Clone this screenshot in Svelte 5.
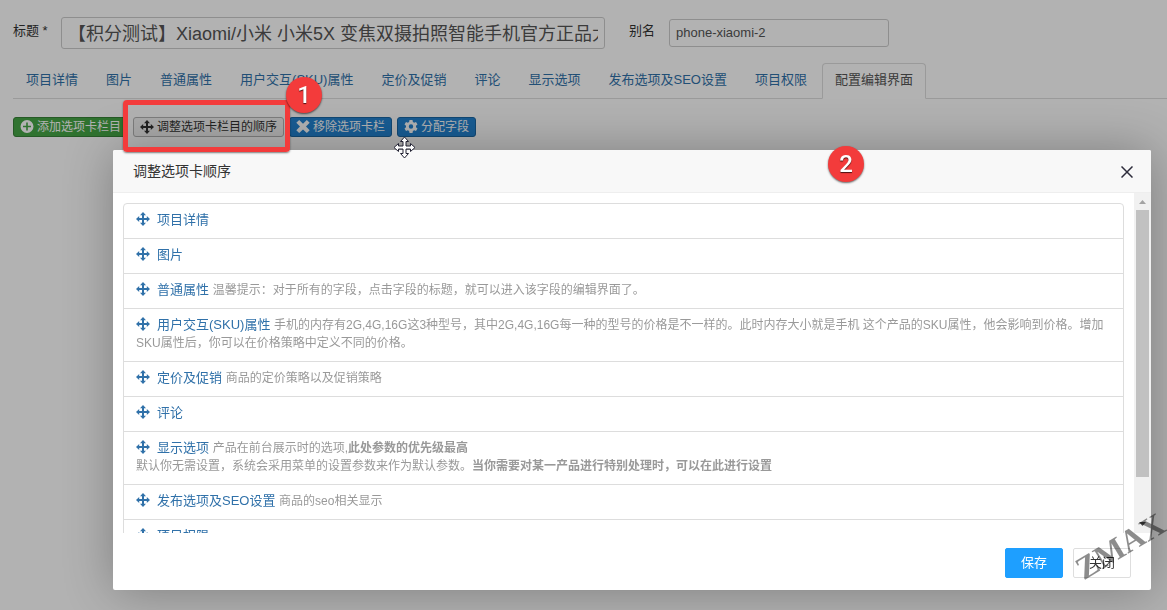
<script>
	let title = '【积分测试】Xiaomi/小米 小米5X 变焦双摄拍照智能手机官方正品大';
	let alias = 'phone-xiaomi-2';
	let activeTab = '配置编辑界面';
	let showModal = true;

	const tabs = [
		'项目详情',
		'图片',
		'普通属性',
		'用户交互(SKU)属性',
		'定价及促销',
		'评论',
		'显示选项',
		'发布选项及SEO设置',
		'项目权限',
		'配置编辑界面'
	];

	const items = [
		{ name: '项目详情' },
		{ name: '图片' },
		{ name: '普通属性', note: '温馨提示：对于所有的字段，点击字段的标题，就可以进入该字段的编辑界面了。' },
		{
			name: '用户交互(SKU)属性',
			note: '手机的内存有2G,4G,16G这3种型号，其中2G,4G,16G每一种的型号的价格是不一样的。此时内存大小就是手机 这个产品的SKU属性，他会影响到价格。增加SKU属性后，你可以在价格策略中定义不同的价格。'
		},
		{ name: '定价及促销', note: '商品的定价策略以及促销策略' },
		{ name: '评论' },
		{
			name: '显示选项',
			note: '产品在前台展示时的选项,',
			strong: '此处参数的优先级最高',
			more: '默认你无需设置，系统会采用菜单的设置参数来作为默认参数。',
			moreStrong: '当你需要对某一产品进行特别处理时，可以在此进行设置'
		},
		{ name: '发布选项及SEO设置', note: '商品的seo相关显示' },
		{ name: '项目权限' }
	];

	function closeModal() {
		showModal = false;
	}
</script>

{#snippet moveIcon()}
	<svg class="icon" viewBox="0 0 14 14" aria-hidden="true">
		<path d="M7 0l3 3.200H8V6h2.800V4L14 7l-3.200 3V8H8v2.800h2L7 14l-3-3.200h2V8H3.200v2L0 7l3.200-3v2H6V3.200H4z" />
	</svg>
{/snippet}

<div class="page">
	<form class="title-row">
		<label for="title">标题 *</label>
		<input id="title" class="input-title" type="text" bind:value={title} />
		<label for="alias" class="alias-label">别名</label>
		<input id="alias" class="input-alias" type="text" bind:value={alias} />
	</form>

	<nav class="tabs">
		{#each tabs as tab}
			<a href="#tab" class:active={tab === activeTab} on:click|preventDefault={() => (activeTab = tab)}>{tab}</a>
		{/each}
	</nav>

	<div class="toolbar">
		<button type="button" class="btn btn-success">
			<svg class="icon" viewBox="0 0 14 14" aria-hidden="true">
				<path fill-rule="evenodd" d="M7 0a6.500 6.500 0 1 1 0 13a6.500 6.500 0 1 1 0-13zM6.200 2.500v3.200H3v1.600h3.200v3.200h1.600V7.300H11V5.700H7.800V2.500z" />
			</svg>
			添加选项卡栏目
		</button>
		<button type="button" class="btn" on:click={() => (showModal = true)}>
			{@render moveIcon()}
			调整选项卡栏目的顺序
		</button>
		<button type="button" class="btn btn-info">
			<svg class="icon" viewBox="0 0 14 14" aria-hidden="true">
				<path d="M3.200 0L7 3.700 10.800 0l2.900 2.800L10 6.500l3.700 3.700-2.900 2.900L7 9.400l-3.800 3.700-2.900-2.900L4 6.500 0.300 2.800z" />
			</svg>
			移除选项卡栏
		</button>
		<button type="button" class="btn btn-info">
			<svg class="icon" viewBox="0 0 14 14" aria-hidden="true">
				<path fill-rule="evenodd" d="M5.500 0h3l.4 1.900 1.300.8 1.800-.7 1.500 2.600L12 5.800v1.400l1.500 1.200L12 11l-1.800-.7-1.300.8-.4 1.900h-3l-.4-1.900-1.300-.8L2 11 .5 8.400 2 7.200V5.800L.5 4.600 2 2l1.800.7 1.300-.8zM7 4.300a2.200 2.200 0 1 0 0 4.400a2.200 2.200 0 1 0 0-4.400z" />
			</svg>
			分配字段
		</button>
	</div>
</div>

{#if showModal}
	<div class="shade"></div>
	<div class="modal" role="dialog" aria-labelledby="modal-title">
		<div class="modal-header">
			<span id="modal-title">调整选项卡顺序</span>
			<button type="button" class="close" aria-label="关闭" on:click={closeModal}>
				<svg viewBox="0 0 12 12" aria-hidden="true">
					<path d="M0.500 0.500l11 11M11.500 0.500l-11 11" />
				</svg>
			</button>
		</div>
		<div class="modal-body">
			<ul class="list">
				{#each items as item}
					<li>
						<a href="#item" on:click|preventDefault>{@render moveIcon()}{item.name}</a>
						{#if item.note}
							<small>{item.note}{#if item.strong}<strong>{item.strong}</strong><br />{item.more}<strong>{item.moreStrong}</strong>{/if}</small>
						{/if}
					</li>
				{/each}
			</ul>
			<div class="scrollbar" aria-hidden="true">
				<svg viewBox="0 0 17 17"><path d="M5 11h7L8.500 7z" fill="#a3a3a3" /></svg>
				<div class="thumb"></div>
				<svg viewBox="0 0 17 17"><path d="M5 6h7L8.500 10z" fill="#505050" /></svg>
			</div>
		</div>
		<div class="modal-footer">
			<button type="button" class="action primary">保存</button>
			<button type="button" class="action" on:click={closeModal}>关闭</button>
		</div>
	</div>
{/if}

<div class="highlight"></div>
<span class="step step-one">1</span>
<span class="step step-two">2</span>

<svg class="cursor" viewBox="0 0 23 23" aria-hidden="true">
	<path d="M11.500 1l4 4.500h-2.500V10h4.500V7.500l4.500 4-4.500 4V13H13v4.500h2.500l-4 4.500-4-4.500H10V13H5.500v2.500L1 11.500l4.500-4V10H10V5.500H7.500z" />
</svg>

<span class="watermark">ZMAX</span>

<style>
	:global(body) {
		background: #fff;
		color: #333;
		font: 13px/18px 'Liberation Sans', 'Noto Sans CJK SC', sans-serif;
	}

	:global(html),
	:global(body) {
		overflow: hidden;
	}

	a {
		color: #3071a9;
		text-decoration: none;
	}

	button,
	input {
		box-sizing: border-box;
		font-family: inherit;
		margin: 0;
	}

	.icon {
		width: 14px;
		height: 14px;
		flex: none;
		fill: currentColor;
	}

	.page {
		padding: 17px 0 0 13px;
	}

	.title-row {
		display: flex;
		align-items: center;
		height: 32px;
	}

	.title-row label {
		width: 48px;
		padding-bottom: 4px;
	}

	.title-row .alias-label {
		width: 40px;
		margin-left: 24px;
	}

	input {
		border: 1px solid #ccc;
		border-radius: 3px;
		background: #fff;
		color: #555;
		padding: 2px 6px 4px;
		outline: 0;
	}

	.input-title {
		width: 544px;
		height: 32px;
		font-size: 18px;
	}

	.input-alias {
		width: 220px;
		height: 28px;
		font-size: 13px;
	}

	.tabs {
		display: flex;
		gap: 2px;
		margin-top: 14px;
		border-bottom: 1px solid #ddd;
	}

	.tabs a {
		padding: 7px 12px 9px;
		margin-bottom: -1px;
		border: 1px solid transparent;
		border-radius: 4px 4px 0 0;
		white-space: nowrap;
	}

	.tabs .active {
		color: #555;
		background: #fff;
		border-color: #ddd;
		border-bottom-color: #fff;
	}

	.toolbar {
		display: flex;
		gap: 5px;
		margin-top: 18px;
	}

	.btn {
		display: flex;
		align-items: center;
		gap: 3px;
		height: 20px;
		padding: 0 6px;
		border: 1px solid #b3b3b3;
		border-radius: 3px;
		background: #f3f3f3;
		color: #333;
		font-size: 12px;
		line-height: 18px;
		white-space: nowrap;
	}

	.btn-success {
		background: #46a546;
		border-color: #378137;
		color: #fff;
	}

	.btn-info {
		background: #2384d3;
		border-color: #1b67a5;
		color: #fff;
	}

	.shade {
		position: fixed;
		inset: 0;
		background: rgba(0, 0, 0, 0.3);
	}

	.modal {
		position: absolute;
		top: 150px;
		left: 113px;
		right: 16px;
		background: #fff;
		border-radius: 2px;
		box-shadow: 1px 1px 50px rgba(0, 0, 0, 0.3);
	}

	.modal-header {
		display: flex;
		align-items: center;
		justify-content: space-between;
		height: 42px;
		padding: 0 18px 0 20px;
		border-bottom: 1px solid #eee;
		border-radius: 2px 2px 0 0;
		background: #f8f8f8;
		font-size: 14px;
	}

	.close {
		display: flex;
		padding: 1px 0 0;
		border: 0;
		background: none;
		cursor: pointer;
	}

	.close svg {
		width: 12px;
		height: 12px;
		stroke: #2d2c3b;
		stroke-width: 1.5;
	}

	.modal-body {
		display: flex;
		height: 340px;
		overflow: hidden;
	}

	.list {
		flex: 1;
		align-self: flex-start;
		margin: 10px;
		padding: 0;
		border: 1px solid #ddd;
		border-radius: 4px;
		list-style: none;
	}

	.list li {
		padding: 7px 12px 9px;
	}

	.list li + li {
		border-top: 1px solid #ddd;
	}

	.list .icon {
		margin-right: 7px;
		vertical-align: -2px;
	}

	.list small {
		color: #999;
		font-size: 12px;
	}

	.scrollbar {
		display: flex;
		flex-direction: column;
		width: 17px;
		background: #f1f1f1;
	}

	.scrollbar svg {
		width: 17px;
		height: 17px;
		flex: none;
	}

	.thumb {
		height: 267px;
		margin: 0 2px auto;
		background: #c1c1c1;
	}

	.modal-footer {
		display: flex;
		justify-content: flex-end;
		gap: 10px;
		padding: 15px 20px 12px;
	}

	.action {
		height: 30px;
		padding: 0 15px 4px;
		border: 1px solid #dedede;
		border-radius: 2px;
		background: #fff;
		color: #333;
		font-size: 13px;
	}

	.primary {
		border-color: #1e9fff;
		background: #1e9fff;
		color: #fff;
	}

	.highlight {
		position: absolute;
		top: 100px;
		left: 123px;
		width: 157px;
		height: 42px;
		border: 5px solid #f33b3b;
		border-radius: 4px;
		box-shadow: 0 1px 2px rgba(0, 0, 0, 0.5);
	}

	.step {
		position: absolute;
		width: 36px;
		height: 36px;
		border-radius: 50%;
		background: #f33b3b;
		box-shadow: 0 1px 2px rgba(0, 0, 0, 0.6);
		color: #fff;
		font: 500 24px/36px Roboto, sans-serif;
		text-align: center;
		text-shadow: 0 1px 1px rgba(0, 0, 0, 0.7);
	}

	.step-one {
		top: 77px;
		left: 286px;
	}

	.step-two {
		top: 146px;
		left: 828px;
	}

	.cursor {
		position: absolute;
		top: 136px;
		left: 393px;
		width: 23px;
		height: 23px;
		fill: #fff;
		stroke: #223;
	}

	.watermark {
		position: absolute;
		top: 528px;
		left: 1071px;
		color: rgba(0, 0, 0, 0.45);
		font: bold 32px/36px 'Liberation Serif', serif;
		transform: rotate(-31deg);
		pointer-events: none;
	}
</style>
